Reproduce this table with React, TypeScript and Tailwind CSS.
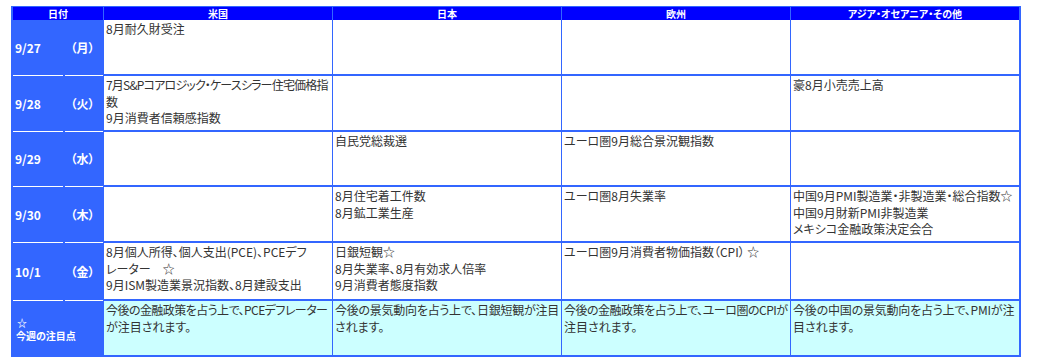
import React from "react";

interface ScheduleRow {
  date: string;
  day: string;
  height: string;
  us: string[];
  jp: string[];
  eu: string[];
  asia: string[];
}

const rows: ScheduleRow[] = [
  {
    date: "9/27",
    day: "（月）",
    height: "h-[56px]",
    us: ["8月耐久財受注"],
    jp: [],
    eu: [],
    asia: [],
  },
  {
    date: "9/28",
    day: "（火）",
    height: "h-[56px]",
    us: ["7月S&Pコアロジック・ケースシラー住宅価格指", "数", "9月消費者信頼感指数"],
    jp: [],
    eu: [],
    asia: ["豪8月小売売上高"],
  },
  {
    date: "9/29",
    day: "（水）",
    height: "h-[55px]",
    us: [],
    jp: ["自民党総裁選"],
    eu: ["ユーロ圏9月総合景況観指数"],
    asia: [],
  },
  {
    date: "9/30",
    day: "（木）",
    height: "h-[56px]",
    us: [],
    jp: ["8月住宅着工件数", "8月鉱工業生産"],
    eu: ["ユーロ圏8月失業率"],
    asia: [
      "中国9月PMI製造業・非製造業・総合指数☆",
      "中国9月財新PMI非製造業",
      "メキシコ金融政策決定会合",
    ],
  },
  {
    date: "10/1",
    day: "（金）",
    height: "h-[58px]",
    us: [
      "8月個人所得、個人支出(PCE)、PCEデフ",
      "レーター　☆",
      "9月ISM製造業景況指数、8月建設支出",
    ],
    jp: ["日銀短観☆", "8月失業率、8月有効求人倍率", "9月消費者態度指数"],
    eu: ["ユーロ圏9月消費者物価指数（CPI） ☆"],
    asia: [],
  },
];

const notes: string[][] = [
  ["今後の金融政策を占う上で、PCEデフレーター", "が注目されます。"],
  ["今後の景気動向を占う上で、日銀短観が注目", "されます。"],
  ["今後の金融政策を占う上で、ユーロ圏のCPIが", "注目されます。"],
  ["今後の中国の景気動向を占う上で、PMIが注", "目されます。"],
];

// lines that run to the right edge of their cell and need tighter spacing
const tighter: Record<string, string> = {
  "7月S&Pコアロジック・ケースシラー住宅価格指": "tracking-[-0.8px]",
  "今後の金融政策を占う上で、PCEデフレーター": "tracking-[-0.55px]",
  "今後の金融政策を占う上で、ユーロ圏のCPIが": "tracking-[-0.5px]",
  "今後の景気動向を占う上で、日銀短観が注目": "tracking-[-0.25px]",
  "今後の中国の景気動向を占う上で、PMIが注": "tracking-[-0.2px]",
};

const headers = ["米国", "日本", "欧州", "アジア・オセアニア・その他"];

const Cell: React.FC<{ lines: string[]; note?: boolean }> = ({ lines, note }) => (
  <div
    className={`border-l border-[#3366ff] pl-[2px] pt-px overflow-hidden whitespace-nowrap text-[12px] leading-[16.5px] text-[#333] ${
      note ? "bg-[#ccffff]" : "bg-white border-b-2"
    }`}
  >
    {lines.map((line, i) => (
      <div key={i} className={tighter[line] || ""}>
        {line}
      </div>
    ))}
  </div>
);

export default function App() {
  return (
    <div className="bg-white min-h-[364px] pt-[6px] pl-[11px] font-[family-name:'Noto_Sans_CJK_JP','Noto_Sans',sans-serif] [font-feature-settings:'palt']">
      <div className="w-[1010px] border-[#3366ff] border-t border-l-2 border-r-2 border-b-2 bg-[#3366ff]">
        {/* header */}
        <div className="grid grid-cols-[50px_40px_229px_229px_229px_229px] h-[13px] bg-[#0000ff] text-white font-bold text-[10px] leading-[13px]">
          <div className="col-span-2 text-center">日付</div>
          {headers.map((h) => (
            <div key={h} className="border-l border-[#3366ff] text-center">
              {h}
            </div>
          ))}
        </div>

        {rows.map((row) => (
          <div
            key={row.date}
            className={`grid grid-cols-[50px_40px_229px_229px_229px_229px] ${row.height}`}
          >
            <div className="bg-[#3366ff]">
              <div className="h-full flex items-center pl-[2px] border-b border-white text-white font-bold text-[12px]">
                {row.date}
              </div>
            </div>
            <div className="bg-[#3366ff] pl-[2px]">
              <div className="h-full flex items-center justify-center pr-[3px] border-b border-white text-white font-bold text-[12px]">
                {row.day}
              </div>
            </div>
            <Cell lines={row.us} />
            <Cell lines={row.jp} />
            <Cell lines={row.eu} />
            <Cell lines={row.asia} />
          </div>
        ))}

        {/* 今週の注目点 */}
        <div className="grid grid-cols-[50px_40px_229px_229px_229px_229px] h-[54px]">
          <div className="col-span-2 bg-[#3366ff] flex flex-col justify-center pl-[3px] pt-[2px] text-white font-bold text-[10px] leading-[13px]">
            <div className="pl-px">☆</div>
            <div>今週の注目点</div>
          </div>
          {notes.map((n, i) => (
            <Cell key={i} lines={n} note />
          ))}
        </div>
      </div>
    </div>
  );
}
